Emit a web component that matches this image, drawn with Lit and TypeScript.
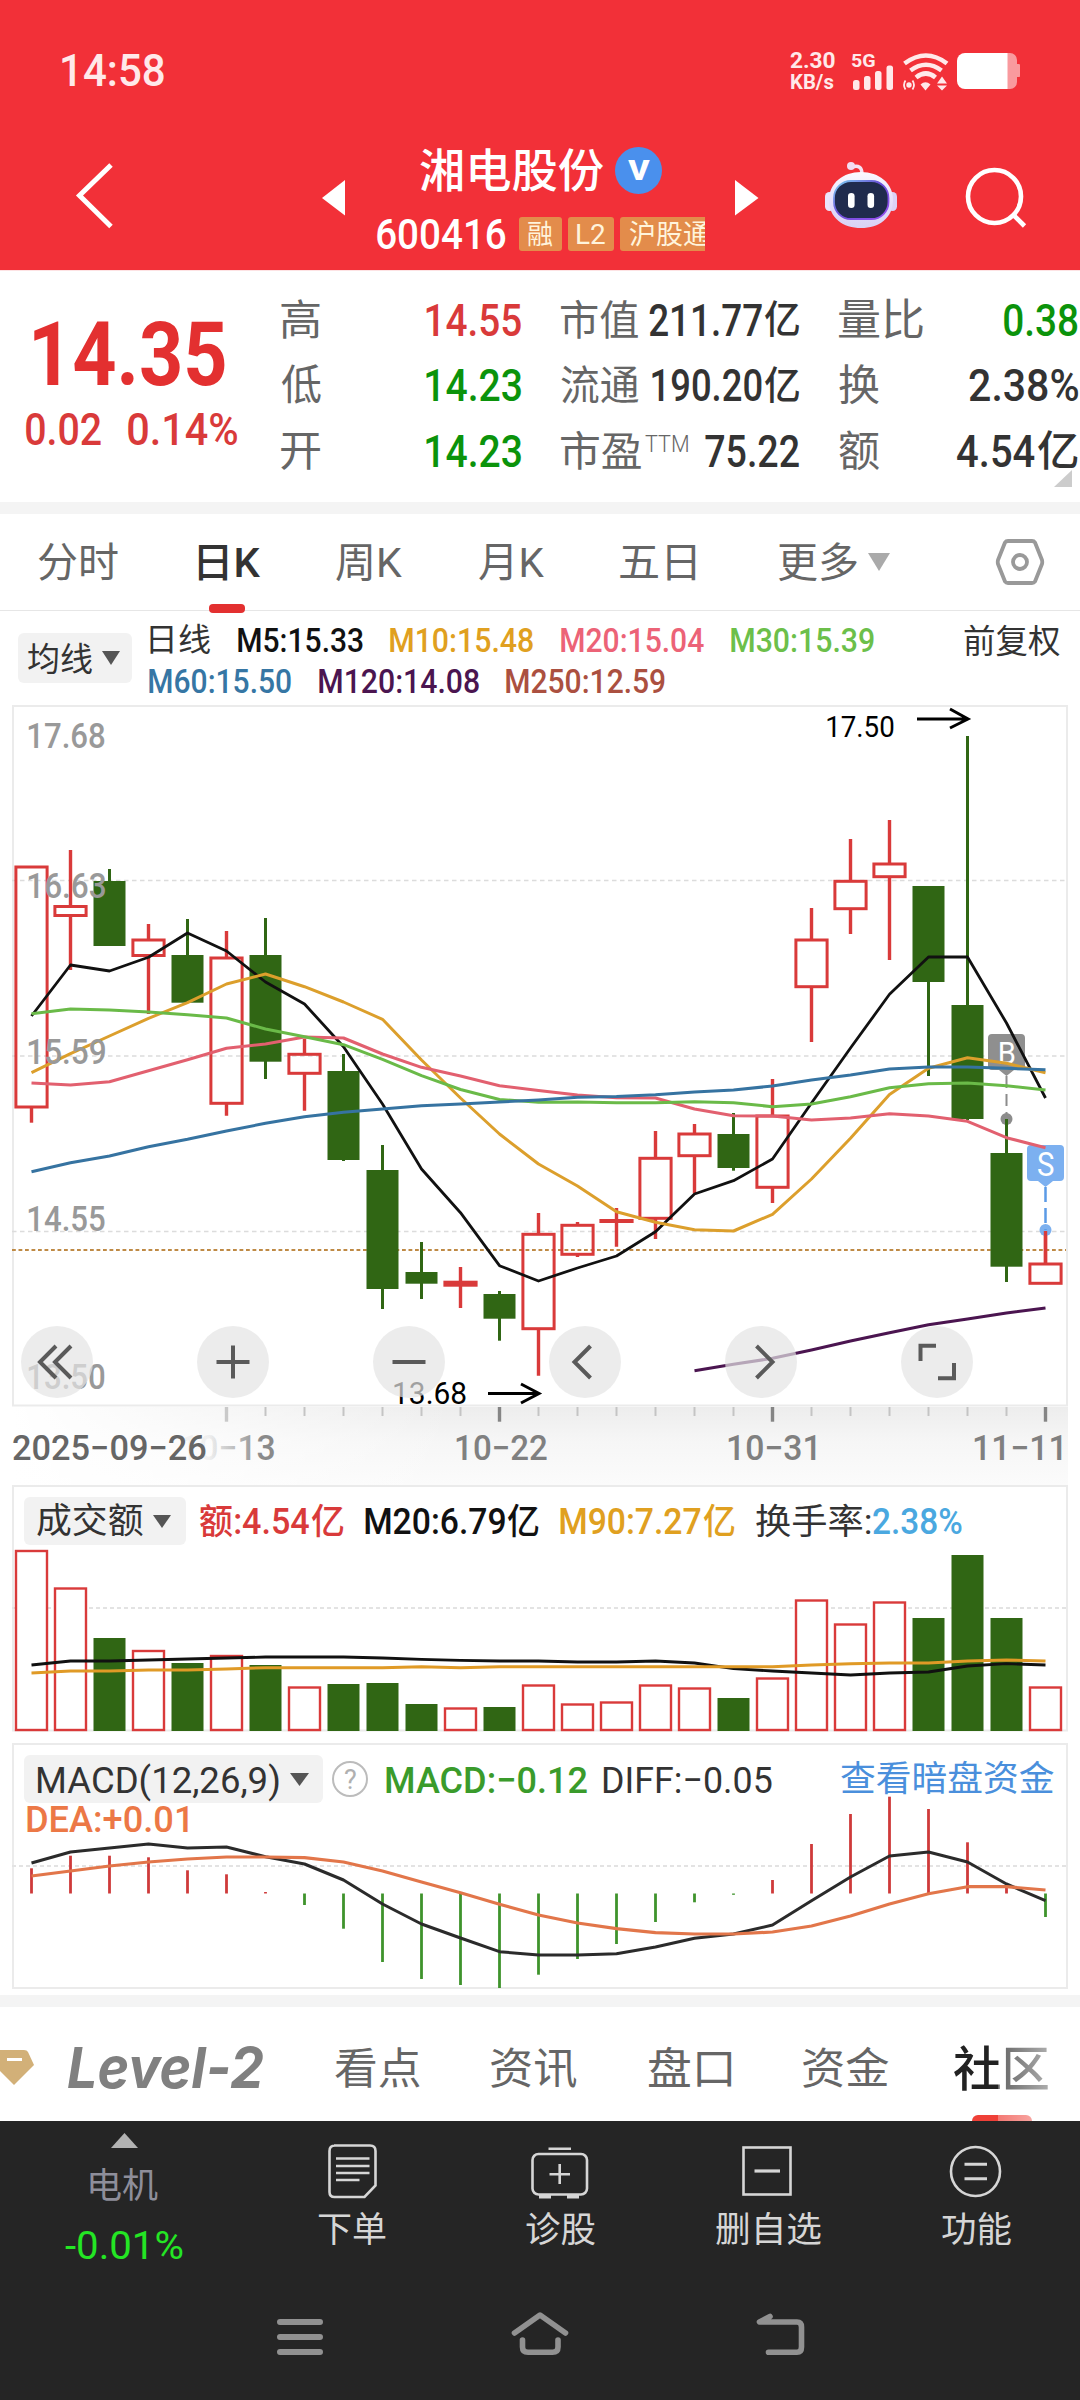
import { LitElement, html, svg, css } from "lit";
import { customElement, property } from "lit/decorators.js";

const FAMILY = 'Roboto, "Noto Sans CJK SC", sans-serif';
const RED = "#d93a3a";
const GREEN = "#306614";
const PITCH = 39;
const X0 = 31.5;
const cx = (i: number) => X0 + PITCH * i;

const ctx = document.createElement("canvas").getContext("2d")!;

/** Horizontal scale and offset that make the ink of a text fill a width. */
function fit(text: string, w: number, font: string) {
  ctx.font = font;
  const m = ctx.measureText(text);
  const s = w / (m.actualBoundingBoxRight + m.actualBoundingBoxLeft);
  return { s, dx: m.actualBoundingBoxLeft * s };
}

function label(x: number, y: number, text: string, w: number, size: number, weight: number, fill: string, family = FAMILY) {
  const f = fit(text, w, `${weight} ${size}px ${family}`);
  return svg`<text transform="translate(${x + f.dx} ${y}) scale(${f.s} 1)" font-family=${family} font-size=${size} font-weight=${weight} fill=${fill}>${text}</text>`;
}

function line(values: number[], color: string, width = 3, start = 0) {
  const pts = values.map((v, i) => `${cx(i + start)},${v}`).join(" ");
  return svg`<polyline points=${pts} fill="none" stroke=${color} stroke-width=${width} stroke-linejoin="round" />`;
}

@customElement("fit-text")
export class FitText extends LitElement {
  @property() t = "";
  @property({ type: Number }) w = 0;
  @property({ type: Number }) s = 40;
  @property({ type: Number }) wt = 400;
  @property() family = FAMILY;
  @property() slant = "normal";

  static styles = css`
    :host { display: block; flex: none; line-height: 1; }
    span { display: block; width: max-content; white-space: pre; line-height: 1; transform-origin: 0 0; }
  `;

  render() {
    const f = fit(this.t, this.w, `${this.slant} ${this.wt} ${this.s}px ${this.family}`);
    return html`<style>:host { width: ${this.w}px; }</style>
      <span style="font: ${this.slant} ${this.wt} ${this.s}px/1 ${this.family}; transform: translate(${f.dx}px, 1.3px) scaleX(${f.s})">${this.t}</span>`;
  }
}

const ft = (t: string, w: number, s: number, wt = 400, cls = "") =>
  html`<fit-text class=${cls} .t=${t} .w=${w} .s=${s} .wt=${wt}></fit-text>`;

/* ---------- data ---------- */

type Candle = [up: 0 | 1, high: number, top: number, bottom: number, low: number];
const candles: Candle[] = [
  [1, 867, 867, 1107, 1122.7], [1, 850, 906.5, 915.5, 970], [0, 869, 881, 946, 946], [1, 924, 940, 955.5, 1014],
  [0, 919, 955, 1002.7, 1002.7], [1, 931, 958, 1103.3, 1115.7], [0, 918, 955, 1061.7, 1079], [1, 1039, 1054.3, 1073.3, 1110.7],
  [0, 1054, 1071, 1160, 1161], [0, 1145, 1170, 1289, 1309], [0, 1242, 1272, 1283.7, 1299], [1, 1267, 1282.2, 1285.2, 1308],
  [0, 1291, 1294, 1318.7, 1340.7], [1, 1213, 1234.3, 1328.7, 1375.7], [1, 1222, 1225.3, 1254.3, 1257], [1, 1208, 1220.5, 1221.5, 1246.7],
  [1, 1131, 1158.3, 1218.3, 1239], [1, 1124, 1134, 1155.7, 1193.3], [0, 1113, 1134, 1168, 1170.7], [1, 1079, 1116, 1187.3, 1203],
  [1, 908, 940, 986.7, 1042], [1, 839, 881.3, 908.7, 934], [1, 820, 864, 876.7, 960], [0, 886, 886, 982, 1076],
  [0, 736, 1005, 1119, 1120], [0, 1119, 1153, 1266.7, 1282], [1, 1230, 1264, 1283.3, 1283.3],
];
const ma5 = [1016, 965, 971, 957.3, 933, 951, 982, 1004, 1046.7, 1104, 1169, 1212.7, 1265.7, 1281, 1268, 1256, 1231.7, 1194, 1180.7, 1159, 1103, 1048, 994.3, 957, 957, 1023, 1098];
const ma10 = [1072.7, 1053.7, 1036, 1018.3, 1002.7, 984, 974, 986.7, 1002, 1019.3, 1060, 1098, 1134, 1164, 1186, 1211.7, 1222.3, 1229.7, 1231, 1214.3, 1179, 1138.3, 1094.5, 1068.3, 1057.7, 1063.3, 1072.7];
const ma20 = [1083, 1085, 1081.7, 1070.7, 1059.7, 1048.3, 1044, 1037, 1038, 1054, 1067.3, 1076, 1085.7, 1090.5, 1095, 1097.7, 1098, 1109, 1115.7, 1116, 1120, 1118, 1113.7, 1116, 1121.3, 1137.7, 1147.7];
const ma30 = [1013.7, 1009, 1010, 1012, 1014.7, 1018, 1029, 1036.7, 1044.7, 1059.3, 1075.7, 1089.5, 1099.5, 1102.3, 1102, 1102.7, 1102.7, 1101.7, 1102.7, 1106.7, 1104, 1096.7, 1087.7, 1083.7, 1083, 1085.7, 1090];
const ma60 = [1171.7, 1162.7, 1156, 1146.7, 1139.3, 1131, 1123.3, 1116.7, 1112.3, 1109, 1105.7, 1104, 1102, 1100, 1097.3, 1096.5, 1094.7, 1092, 1090, 1086, 1080, 1075, 1069, 1067, 1067, 1068.3, 1069.7];
const ma120 = [1370.7, 1364.3, 1358.3, 1350, 1341, 1332.7, 1324.7, 1319, 1313, 1308];

const volumes = [1551, 1588.5, 1638, 1651, 1663, 1656, 1665, 1687.5, 1684, 1683, 1704, 1708.5, 1707, 1685.5, 1704.5, 1702.5, 1685.5, 1688.5, 1698, 1678.5, 1600.5, 1624.5, 1602.5, 1618, 1555, 1618, 1687.5];
const vol20 = [1665, 1661, 1661, 1660, 1659, 1658, 1657, 1657, 1657, 1658, 1659.3, 1660.3, 1661, 1661, 1662, 1662, 1661, 1663, 1668.7, 1671, 1673, 1675, 1673, 1672, 1666, 1663.7, 1665];
const vol90 = [1673, 1671, 1671, 1670, 1670, 1669, 1667.7, 1667.7, 1667.7, 1667.7, 1666.7, 1667.7, 1666.7, 1666.7, 1666.7, 1666.7, 1666.7, 1666.7, 1666.7, 1666.7, 1665, 1663.7, 1663, 1663, 1661, 1660, 1661];

const macd = [1868.3, 1855.7, 1855.7, 1857.3, 1870.3, 1874.3, 1892, 1905, 1928.7, 1962, 1979, 1985, 1988, 1974.7, 1959, 1944, 1922, 1902.3, 1894.8, 1880, 1844, 1814, 1796.7, 1809, 1842.3, 1888, 1917];
const diff = [1863, 1852, 1848, 1844, 1848, 1847, 1856.7, 1864, 1880, 1904, 1924, 1938, 1951.7, 1955, 1955, 1953.7, 1947, 1938.3, 1934, 1925, 1900.7, 1877, 1856, 1852, 1862, 1884, 1900.7];
const dea = [1876, 1871, 1866, 1862, 1859, 1857, 1857, 1857.7, 1862, 1871, 1882, 1892.7, 1904.3, 1915, 1923, 1928.7, 1932.7, 1934, 1934, 1932, 1926, 1916, 1904, 1893.7, 1886.7, 1886.7, 1890];

/* ---------- chart pieces ---------- */

const candle = ([up, high, top, bottom, low]: Candle, i: number) => {
  const x = cx(i);
  if (!up) {
    return svg`<path d="M${x} ${high}V${low}" stroke=${GREEN} stroke-width="3"/><rect x=${x - 16} y=${top} width="32" height=${bottom - top} fill=${GREEN}/>`;
  }
  return svg`<path d="M${x} ${high}V${top}M${x} ${bottom}V${low}" stroke=${RED} stroke-width="3.4"/>
    <rect x=${x - 15.6} y=${top} width="31.2" height=${bottom - top} fill="none" stroke=${RED} stroke-width="3"/>`;
};

const buttonGlyphs = [
  "M56 1346L40 1362L56 1378M71 1346L55 1362L71 1378",
  "M216.5 1362H249.5M233 1345.5V1378.5",
  "M392.5 1362H425.5",
  "M590.5 1346L574.5 1362L590.5 1378",
  "M756.5 1346L772.5 1362L756.5 1378",
  "M920.5 1361V1345.7H936M938 1378.3H954V1363",
];

const kChart = () => svg`
  <defs>
    <linearGradient id="axisX"><stop offset="0" stop-color="#fff"/><stop offset=".2" stop-color="#fff" stop-opacity=".55"/><stop offset=".42" stop-color="#fff" stop-opacity="0"/></linearGradient>
    <linearGradient id="axisY" x2="0" y2="1"><stop offset="0" stop-color="#ededed"/><stop offset=".45" stop-color="#f6f6f6"/><stop offset="1" stop-color="#fbfbfb"/></linearGradient>
  </defs>
  <rect x="12" y="1407" width="1056" height="78" fill="url(#axisY)"/>
  <rect x="12" y="1407" width="1056" height="78" fill="url(#axisX)"/>
  <rect x="13" y="706" width="1054" height="699.5" fill="none" stroke="#ebebeb" stroke-width="2"/>
  ${[880.5, 1056, 1231.5].map((y) => svg`<path d="M12 ${y}H1066" stroke="#dcdcdc" stroke-width="1.4" stroke-dasharray="4.5 3.5"/>`)}
  <path d="M12 1250H1066" stroke="#bf8a45" stroke-width="2.2" stroke-dasharray="3.8 2.7"/>
  ${candles.map(candle)}
  <g>
    <path d="M1006.5 1076V1119" stroke="#8c8c8c" stroke-width="2" stroke-dasharray="12 6"/>
    <circle cx="1006.5" cy="1119" r="6" fill="#8c8c8c"/>
    <path d="M992 1034H1021a4 4 0 0 1 4 4V1066a4 4 0 0 1-4 4H1014L1006.5 1076L999 1070H992a4 4 0 0 1-4-4V1038a4 4 0 0 1 4-4Z" fill="#8f8f8f"/>
    ${label(999.5, 1063.5, "B", 15.5, 32, 400, "#fff")}
    <circle cx="1045.5" cy="1230" r="6" fill="#7cb0ef"/>
    <path d="M1045.5 1187V1230" stroke="#5b9be6" stroke-width="2.5" stroke-dasharray="15 6"/>
    <path d="M1045.5 1231V1264" stroke=${RED} stroke-width="3.4"/>
    <path d="M1031 1145H1060a4 4 0 0 1 4 4V1177a4 4 0 0 1-4 4H1053L1045.5 1187L1038 1181H1031a4 4 0 0 1-4-4V1149a4 4 0 0 1 4-4Z" fill="#7cb0f0"/>
    ${label(1038, 1175.5, "S", 16, 33, 400, "#fff")}
    <path d="M1006.5 1119V1153" stroke=${GREEN} stroke-width="3"/>
  </g>
  ${line(ma5, "#111", 2.8)} ${line(ma10, "#dc9f2c", 3)} ${line(ma20, "#e2606f", 3)}
  ${line(ma30, "#6aba48", 3)} ${line(ma60, "#3673a1", 3)} ${line(ma120, "#4b1550", 3, 17)}
  ${[["17.68", 748], ["16.63", 898], ["15.59", 1064], ["14.55", 1231], ["13.50", 1389]].map(([t, y]) => label(28, y as number, t as string, 77, 35, 500, "#999"))}
  ${label(827, 737, "17.50", 67, 30, 400, "#000")}
  <path d="M917 719H966M950 709L968 719L950 728" fill="none" stroke="#000" stroke-width="3"/>
  ${label(394, 1404, "13.68", 72, 30.5, 400, "#000")}
  <path d="M488 1393.5H537M521 1384L539 1393.5L521 1403" fill="none" stroke="#000" stroke-width="3"/>
  ${buttonGlyphs.map((d, i) => svg`<circle cx=${57 + i * 176} cy="1362" r="36" fill="#e4e4e4" fill-opacity=".7"/><path d=${d} fill="none" stroke="#5a5a5a" stroke-width="4"/>`)}
  ${Array.from({ length: 22 }, (_, k) => k + 5).map((i) => {
    const major = [5, 12, 19, 26].includes(i);
    return svg`<path d="M${cx(i)} 1407V${major ? 1421.7 : 1416}" stroke=${major ? (i === 5 ? "#c9c9c9" : "#858585") : "#c4c4c4"} stroke-width=${major ? 3.4 : 2}/>`;
  })}
  ${label(182, 1460, "10−13", 92, 35, 500, "url(#fadeText)")}
  ${label(13, 1460, "2025−09−26", 193, 35, 500, "#666")}
  ${label(456, 1460, "10−22", 91, 35, 500, "#808080")}
  ${label(728, 1460, "10−31", 88, 35, 500, "#808080")}
  ${label(974, 1460, "11−11", 88, 35, 500, "#808080")}
`;

const volumeChart = () => svg`
  <rect x="13" y="1486" width="1054" height="244.5" fill="none" stroke="#ebebeb" stroke-width="2"/>
  <path d="M12 1608H1066" stroke="#e3e3e3" stroke-width="2" stroke-dasharray="4 3"/>
  ${volumes.map((top, i) => candles[i][0]
    ? svg`<rect x=${cx(i) - 15.5} y=${top} width="31" height=${1730 - top} fill="#fff" stroke=${RED} stroke-width="2.4"/>`
    : svg`<rect x=${cx(i) - 16} y=${top} width="32" height=${1731 - top} fill=${GREEN}/>`)}
  ${line(vol20, "#111", 2.8)} ${line(vol90, "#e09a26", 3)}
`;

const macdChart = () => svg`
  <rect x="13" y="1744" width="1054" height="244" fill="none" stroke="#ebebeb" stroke-width="2"/>
  <path d="M12 1866H1066" stroke="#e3e3e3" stroke-width="2" stroke-dasharray="4 3"/>
  ${macd.map((y, i) => svg`<path d="M${cx(i)} 1893.5V${y}" stroke=${y < 1893.5 ? "#cf3a3a" : "#3f932c"} stroke-width="2.8"/>`)}
  ${line(diff, "#2b2b2b", 3)} ${line(dea, "#e2764a", 3.2)}
`;

const caret = (w: number, h: number, fill: string) =>
  html`<svg width=${w} height=${h} viewBox="0 0 10 10" preserveAspectRatio="none"><path d="M0 0H10L5 10Z" fill=${fill}/></svg>`;

@customElement("app-root")
export class AppRoot extends LitElement {
  static styles = css`
    :host { display: block; width: 1080px; height: 2400px; overflow: hidden; background: #fff; color: #333; font-family: Roboto, "Noto Sans CJK SC", sans-serif; }
    * { box-sizing: border-box; }
    svg { display: block; flex: none; }
    .row { display: flex; align-items: center; }
    header { height: 270px; background: #f23038; color: #fff; }
    .status { height: 141px; padding: 0 60px 0 62px; justify-content: space-between; }
    .status fit-text { color: #ffe9ea; }
    .net { gap: 16px; }
    .speed { display: flex; flex-direction: column; align-items: center; }
    .nav { display: flex; height: 129px; padding-left: 60px; }
    .prev { margin-left: 185px; }
    .stock { width: 329px; margin-left: 21px; padding-top: 5px; overflow: hidden; }
    .next { margin-left: 23px; }
    .robot { margin-left: 47px; }
    .search { margin-left: 50px; }
    .name { height: 48px; padding-left: 44px; gap: 11px; }
    .badge { display: flex; align-items: center; justify-content: center; width: 47px; height: 47px; border-radius: 50%; background: #4a90ed; }
    .codes { height: 34px; margin-top: 23px; padding-left: 1px; }
    .tags { gap: 6px; margin-left: 13px; }
    .tag { display: flex; align-items: center; flex: none; height: 34px; padding: 0 9px; border-radius: 3px; background: #e38c4b; color: #fff4dc; }
    .tag:last-child { padding-left: 10px; }

    .quote { display: flex; position: relative; height: 232px; border-top: 1px solid #fde3e4; }
    .price { width: 281px; color: #e33030; }
    .big { margin: 38px 0 0 34px; }
    .change { padding: 8.5px 0 0 26px; gap: 27px; color: #d93a3a; }
    .table { display: grid; grid-template-columns: 240px 238px 239px; grid-auto-rows: 65.5px; column-gap: 40px; padding-top: 16px; }
    .cell { justify-content: space-between; }
    .cell > .k { color: #666; }
    .val { gap: 3px; }
    .ttm { align-self: flex-start; margin: 13px auto 0 4px; color: #666; }
    .up { color: #d93a3a; }
    .down { color: #0b930b; }
    .corner { position: absolute; right: 8px; bottom: 15px; }
    .band { height: 12px; background: #f4f4f4; }

    .tabs { height: 97px; padding-left: 38px; gap: 76.5px; color: #666; border-bottom: 1.5px solid #e6e6e6; }
    .tabs .on { color: #333; position: relative; margin: 0 -1px 0 3px; }
    .mark { position: absolute; left: 11px; bottom: -30px; width: 36px; height: 9px; border-radius: 4px; background: #e33030; }
    .more { gap: 11px; margin-left: 5px; }
    .gear { margin-left: 29px; }

    .ma { display: flex; height: 89px; padding-left: 18px; }
    .pill { display: flex; align-items: center; flex: none; border-radius: 6px; background: #f2f2f2; }
    .ma .pill { width: 114px; height: 50px; margin-top: 22px; padding-left: 10px; gap: 10px; }
    .malist { width: 814px; margin-left: 18px; padding-top: 7px; }
    .malist .row { height: 41px; gap: 27.5px; }
    .malist .row + .row { margin-left: -1px; }
    .fq { margin-top: 13.5px; }
    .m5 { color: #111; } .m10 { color: #e0a020; } .m20 { color: #ec6377; } .m30 { color: #6cbf4a; }
    .m60 { color: #3676a4; } .m120 { color: #4b1550; } .m250 { color: #ab5040; }

    .panel { position: relative; }
    .bg { position: absolute; left: 0; top: 0; }
    .front { position: relative; }
    .volume { height: 258px; padding: 12px 0 0 24px; }
    .volume .pill { width: 162px; height: 48px; padding-left: 13px; gap: 10px; }
    .legend { gap: 21px; margin-left: 14px; }
    .item { gap: 2px; }
    .turn { color: #4aa8e0; }
    .macd { height: 252px; padding: 12px 0 0 24px; }
    .macd .pill { width: 299px; height: 48px; padding-left: 14px; gap: 11px; }
    .help { display: flex; align-items: center; justify-content: center; width: 36px; height: 36px; margin: 0 18px 0 9px; border: 2px solid #bcbcbc; border-radius: 50%; color: #b0b0b0; }
    .mg { color: #3a9b2b; }
    .mdiff { margin-left: 17px; }
    .link { margin-left: 69px; color: #4a8fdc; }
    .dea { margin-left: 3px; margin-top: -2px; color: #ec7846; }

    .sections { height: 114px; padding-top: 9px; color: #666; gap: 71px; overflow: hidden; position: relative; }
    .gem { margin-right: -37px; }
    .lv { margin-top: -4px; color: #808080; }
    .on2 { color: #222; margin-left: -6px; }
    .veil { position: absolute; right: 0; top: 0; width: 82px; height: 114px; background: linear-gradient(90deg, rgba(255,255,255,.3), rgba(255,255,255,.62) 60%, #fff 62%); }
    .mark2 { position: absolute; left: 972px; top: 108px; width: 60px; height: 12px; border-radius: 6px; background: #ef4038; }

    .dock { display: grid; grid-template-columns: 248px repeat(4, 208px); height: 139px; background: #252525; color: #d6d6d6; }
    .act { display: flex; flex-direction: column; align-items: center; padding-top: 17.5px; }
    .act fit-text { margin-top: 9.5px; }
    .index { display: flex; flex-direction: column; align-items: center; padding-top: 12px; color: #8e8e9a; }
    .index svg { height: 15px; }
    .index .sector { margin-top: 20px; }
    .pct { margin-top: 23px; color: #24e624; }
    .sys { display: flex; justify-content: center; height: 140px; padding-top: 47px; gap: 177px; background: #252525; }
  `;

  private header() {
    return html`<header>
      <div class="status row">
        ${ft("14:58", 102, 43.5, 500)}
        <div class="net row">
          <div class="speed">${ft("2.30", 45, 22, 700)}${ft("KB/s", 43, 21, 700)}</div>
          <svg width="169" height="42" viewBox="851 50 169 42" fill="#ffe9ea">
            ${label(851, 67, "5G", 24, 18.5, 700, "#ffe9ea")}
            <rect x="853" y="80" width="6.5" height="10" rx="2.5"/><rect x="864" y="76" width="6.5" height="14" rx="2.5"/>
            <rect x="875" y="71" width="6.5" height="19" rx="2.5"/><rect x="886.5" y="65.5" width="6.5" height="24.5" rx="2.5"/>
            <g fill="none" stroke="#ffe9ea" stroke-width="4.6">
              <path d="M904.5 63.5Q926 47.500 947 63.500"/><path d="M910.500 70.500Q926 59 941.500 70.500"/><path d="M916 77.500Q926 69.500 935.500 77.500"/>
            </g>
            <path d="M920.5 84.500Q925.500 80 930.500 84.500L925.500 90.500Z"/>
            <circle cx="909" cy="85" r="2.7"/>
            <path d="M905.500 80.500Q902.500 85 905.500 89.500M912.500 80.500Q915.500 85 912.500 89.500" fill="none" stroke="#ffe9ea" stroke-width="1.8"/>
            <path d="M937 83.500L942 76.500L947 83.500ZM937 85.500L942 90.500L947 85.500Z"/>
            <path d="M1006 53H1010a7 7 0 0 1 7 7V64h1.500a2 2 0 0 1 2 2V75a2 2 0 0 1-2 2H1017V82a7 7 0 0 1-7 7H1006Z" fill="#f99a9e"/>
            <path d="M965 53H1007.500V89H965a8 8 0 0 1-8-8V61a8 8 0 0 1 8-8Z" fill="#fff"/>
          </svg>
        </div>
      </div>
      <div class="nav">
        <svg width="70" height="129" viewBox="60 141 70 129"><path d="M111 165L79.500 195.500L111 226.500" fill="none" stroke="#fff" stroke-width="5"/></svg>
        <svg class="prev" width="40" height="129" viewBox="315 141 40 129"><path d="M345 180V215.500L322 198Z" fill="#fff"/></svg>
        <div class="stock">
          <div class="name row">${ft("湘电股份", 184, 46, 500)}<div class="badge">${ft("V", 23, 28, 900)}</div></div>
          <div class="codes row">${ft("600416", 129, 42, 500)}
            <div class="tags row">
              <div class="tag">${ft("融", 25, 27)}</div><div class="tag">${ft("L2", 28, 28)}</div><div class="tag">${ft("沪股通", 80, 27)}</div>
            </div>
          </div>
        </div>
        <svg class="next" width="40" height="129" viewBox="728 141 40 129"><path d="M735 180V215.500L758.500 198Z" fill="#fff"/></svg>
        <svg class="robot" width="90" height="129" viewBox="815 141 90 129">
          <defs>
            <linearGradient id="shell" x2="0" y2="1"><stop offset="0" stop-color="#fbf8ff"/><stop offset=".6" stop-color="#e4dcfa"/><stop offset="1" stop-color="#d9d2f4"/></linearGradient>
            <linearGradient id="rim" x2="1" y2="1"><stop offset="0" stop-color="#7fd4f2"/><stop offset=".45" stop-color="#6a4fd8"/><stop offset="1" stop-color="#9a4ff0"/></linearGradient>
          </defs>
          <path d="M852 167Q862 164 862 174" fill="none" stroke="#f6e2f3" stroke-width="3.400"/><circle cx="851" cy="166" r="4" fill="#f3dcf2"/>
          <rect x="825" y="192" width="9" height="19" rx="4.500" fill="#ebe4fb"/><rect x="888" y="192" width="9" height="19" rx="4.500" fill="#dcd2f6"/>
          <path d="M861 172C879 172 893 183 893 200C893 218 879 228 861 228C843 228 829 218 829 200C829 183 843 172 861 172Z" fill="url(#shell)"/>
          <rect x="834" y="181" width="54.500" height="38" rx="17" fill="#202b4d" stroke="url(#rim)" stroke-width="1.800"/>
          <rect x="848" y="193" width="6.600" height="15" rx="3.300" fill="#fff"/><rect x="867.500" y="193" width="6.600" height="15" rx="3.300" fill="#fff"/>
        </svg>
        <svg class="search" width="80" height="129" viewBox="955 141 80 129" fill="none" stroke="#fff" stroke-width="4.600"><circle cx="994.500" cy="196.500" r="26.500"/><path d="M1013 214.500L1024.500 226"/></svg>
      </div>
    </header>`;
  }

  private quote() {
    const yi = (n: string, w: number, yw = 34, ys = 39) => html`<div class="val row">${ft(n, w, 44.5, 500)}${ft("亿", yw, ys, 500)}</div>`;
    return html`<section class="quote">
      <div class="price">
        <div class="big">${ft("14.35", 191, 89, 700)}</div>
        <div class="change row">${ft("0.02", 75, 44.5, 500)}${ft("0.14%", 109, 44.5, 500)}</div>
      </div>
      <div class="table">
        <div class="cell row">${ft("高", 39, 42, 400, "k")}${ft("14.55", 95, 44.5, 500, "up")}</div>
        <div class="cell row">${ft("市值", 77, 40.5, 400, "k")}${yi("211.77", 113)}</div>
        <div class="cell row">${ft("量比", 84, 43, 400, "k")}${ft("0.38", 74, 44.5, 500, "down")}</div>
        <div class="cell row">${ft("低", 40, 42, 400, "k")}${ft("14.23", 95, 44.5, 500, "down")}</div>
        <div class="cell row">${ft("流通", 78, 40.5, 400, "k")}${yi("190.20", 110)}</div>
        <div class="cell row">${ft("换", 40, 42, 400, "k")}${ft("2.38%", 109, 44.5, 500)}</div>
        <div class="cell row">${ft("开", 39, 42, 400, "k")}${ft("14.23", 95, 44.5, 500, "down")}</div>
        <div class="cell row">${ft("市盈", 80, 40.5, 400, "k")}${ft("TTM", 43, 24, 300, "ttm")}${ft("75.22", 94, 44.5, 500)}</div>
        <div class="cell row">${ft("额", 40, 42, 400, "k")}${yi("4.54", 78, 40, 42.5)}</div>
      </div>
      <svg class="corner" width="18" height="17" viewBox="0 0 18 17"><path d="M18 0V17H0Z" fill="#ccc"/></svg>
    </section>`;
  }

  private tabs() {
    return html`<nav class="tabs row">
      ${ft("分时", 80, 41)}
      <div class="on">${ft("日K", 63, 41, 500)}<div class="mark"></div></div>
      ${ft("周K", 66, 41)}${ft("月K", 65, 41)}${ft("五日", 76, 41)}
      <div class="more row">${ft("更多", 79, 41)}${caret(22, 18, "#aaa")}</div>
      <svg class="gear" width="50" height="50" viewBox="995 537 50 50" fill="none" stroke="#999" stroke-width="3.800" stroke-linejoin="round"><path d="M1008 541H1032Q1034 541 1035 542.500L1042 560Q1042.500 562 1042 564L1035 581.500Q1034 583 1032 583H1008Q1006 583 1005 581.500L998 564Q997.500 562 998 560L1005 542.500Q1006 541 1008 541Z"/><circle cx="1020" cy="562" r="7"/></svg>
    </nav>`;
  }

  private averages() {
    return html`<section class="ma">
      <div class="pill">${ft("均线", 64, 33)}${caret(18, 14, "#555")}</div>
      <div class="malist">
        <div class="row">${ft("日线", 60, 32)}${ft("M5:15.33", 125, 34, 500, "m5")}${ft("M10:15.48", 143, 34, 500, "m10")}${ft("M20:15.04", 143, 34, 500, "m20")}${ft("M30:15.39", 143, 34, 500, "m30")}</div>
        <div class="row">${ft("M60:15.50", 142, 34, 500, "m60")}${ft("M120:14.08", 160, 34, 500, "m120")}${ft("M250:12.59", 159, 34, 500, "m250")}</div>
      </div>
      <div class="fq">${ft("前复权", 96, 32.5)}</div>
    </section>`;
  }

  private panels() {
    const amount = (n: string, w: number, cls: string) => html`<div class="item row ${cls}">${ft(n, w, 36.5, 500)}${ft("亿", 32, 35, 500)}</div>`;
    return html`
      <svg width="1080" height="785" viewBox="0 700 1080 785">
        <defs><linearGradient id="fadeText"><stop offset=".3" stop-color="#8a8a8a" stop-opacity=".1"/><stop offset=".85" stop-color="#8a8a8a"/></linearGradient></defs>
        ${kChart()}
      </svg>
      <section class="panel volume">
        <svg class="bg" width="1080" height="258" viewBox="0 1485 1080 258">${volumeChart()}</svg>
        <div class="row front">
          <div class="pill">${ft("成交额", 106, 35.5)}${caret(18, 13, "#555")}</div>
          <div class="legend row">
            <div class="item row up">${ft("额", 33, 35, 500)}${ft(":4.54", 74, 36.5, 500)}${ft("亿", 33, 35, 500)}</div>
            ${amount("M20:6.79", 140, "m5")}${amount("M90:7.27", 141, "m10")}
            <div class="item row">${ft("换手率:", 115, 35)}${ft("2.38%", 89, 36.5, 500, "turn")}</div>
          </div>
        </div>
      </section>
      <section class="panel macd">
        <svg class="bg" width="1080" height="252" viewBox="0 1743 1080 252">${macdChart()}</svg>
        <div class="row front">
          <div class="pill">${ft("MACD(12,26,9)", 241, 37, 400)}${caret(19, 13, "#555")}</div>
          <div class="help">${ft("?", 12, 27)}</div>
          ${ft("MACD:−0.12", 201, 37, 500, "mg")}${ft("DIFF:−0.05", 168, 37, 400, "mdiff")}${ft("查看暗盘资金", 213, 35.5, 400, "link")}
        </div>
        <div class="front">${ft("DEA:+0.01", 161, 36, 500, "dea")}</div>
      </section>`;
  }

  private bottom() {
    return html`
      <nav class="sections row">
        <svg class="gem" width="34" height="40" viewBox="0 2048 34 40"><path d="M0 2049H24Q27 2049 28 2051L34 2064L14 2084L0 2070Z" fill="#d2b078"/><path d="M7 2058.500H22" stroke="#fff" stroke-width="3"/></svg>
        <fit-text class="lv" .t=${"Level-2"} .w=${196} .s=${57} .wt=${700} .family=${'Inter, sans-serif'} .slant=${"italic"}></fit-text>
        ${ft("看点", 85, 43.5)}${ft("资讯", 86, 43.5)}${ft("盘口", 84, 43.5)}${ft("资金", 86, 43.5)}${ft("社区", 94, 48, 500, "on2")}
        <div class="mark2"></div><div class="veil"></div>
      </nav>
      <section class="dock">
        <div class="index">
          <svg width="27" height="15" viewBox="0 0 27 15"><path d="M13.500 0L27 15H0Z" fill="#b3b3b3"/></svg>
          ${ft("电机", 68, 35, 400, "sector")}${ft("-0.01%", 118, 38, 400, "pct")}
        </div>
        <div class="act"><svg width="60" height="64" viewBox="322 2139 60 64" fill="none" stroke="#d6d6d6" stroke-width="2.600"><path d="M334 2145.500H370Q375.500 2145.500 375.500 2151V2185.500L364.500 2197H334.500Q329.500 2197 329.500 2192V2151Q329.500 2145.500 335 2145.500"/><path d="M336 2158.500H369.500M336 2166H369.500M336 2173H369.500M336 2180H359.500"/></svg>${ft("下单", 68, 35)}</div>
        <div class="act"><svg width="64" height="64" viewBox="528 2139 64 64" fill="none" stroke="#d6d6d6" stroke-width="2.600"><rect x="532.500" y="2154" width="54.500" height="40.500" rx="6"/><path d="M548.500 2148.700H571M559.700 2164V2184M549.500 2174.200H570"/><path d="M539 2196.500H551M567 2196.500H579" stroke-width="4"/></svg>${ft("诊股", 69, 35)}</div>
        <div class="act"><svg width="60" height="64" viewBox="738 2139 60 64" fill="none" stroke="#d6d6d6" stroke-width="2.600"><rect x="743.500" y="2147.500" width="47" height="47"/><path d="M754.500 2171H780" stroke-width="3.200"/></svg>${ft("删自选", 105, 35)}</div>
        <div class="act"><svg width="60" height="64" viewBox="946 2139 60 64" fill="none" stroke="#d6d6d6" stroke-width="2.600"><circle cx="975.500" cy="2171.500" r="24.500"/><path d="M964.500 2164.200H987M964.500 2178.700H987" stroke-width="3"/></svg>${ft("功能", 69, 35)}</div>
      </section>
      <section class="sys">
        <svg width="60" height="60" viewBox="270 2307 60 60" stroke="#919191" stroke-width="6" stroke-linecap="round"><path d="M280 2322H320M280 2337H320M280 2352H320"/></svg>
        <svg width="66" height="60" viewBox="507 2307 66 60" fill="none" stroke="#919191" stroke-width="5.600" stroke-linecap="round" stroke-linejoin="round"><path d="M514.500 2333L540 2315L565.500 2333M522.500 2340V2347Q522.500 2352.300 528 2352.300H552.500Q558 2352.300 558 2347V2340"/></svg>
        <svg width="60" height="60" viewBox="750 2307 60 60" fill="none" stroke="#919191" stroke-width="5.600" stroke-linecap="round" stroke-linejoin="round"><path d="M770 2316.500L759.500 2322H797Q801.500 2322 801.500 2327V2347Q801.500 2352.300 797 2352.300H768.500"/></svg>
      </section>`;
  }

  render() {
    return html`${this.header()}${this.quote()}
      <div class="band"></div>
      ${this.tabs()}${this.averages()}${this.panels()}
      <div class="band"></div>
      ${this.bottom()}`;
  }
}
